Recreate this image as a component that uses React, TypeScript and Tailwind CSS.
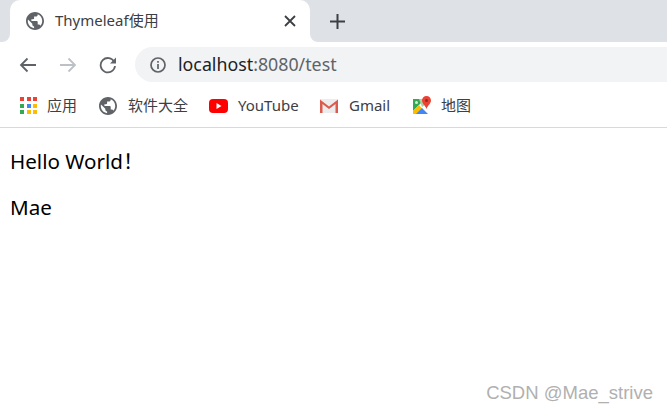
import React from 'react';

const UI_FONT = "font-['Noto_Sans','Noto_Sans_CJK_SC',sans-serif]";

function Globe({ size }: { size: number }) {
  return (
    <svg width={size} height={size} viewBox="2 2 20 20" className="shrink-0">
      <path
        fill="#5f6368"
        d="M12 2C6.48 2 2 6.48 2 12s4.48 10 10 10 10-4.48 10-10S17.52 2 12 2zm-1 17.93c-3.95-.49-7-3.85-7-7.93 0-.62.08-1.21.21-1.79L9 15v1c0 1.1.9 2 2 2v1.93zm6.9-2.54c-.26-.81-1-1.39-1.9-1.39h-1v-3c0-.55-.45-1-1-1H8v-2h2c.55 0 1-.45 1-1V7h2c1.1 0 2-.9 2-2v-.41c2.93 1.19 5 4.06 5 7.41 0 2.08-.8 3.97-2.1 5.39z"
      />
    </svg>
  );
}

function AppsIcon() {
  const colors = ['#ea4335', '#ea4335', '#ea4335', '#34a853', '#4285f4', '#fbbc05', '#34a853', '#fbbc05', '#fbbc05'];
  return (
    <div className="grid grid-cols-3 gap-[2.5px] shrink-0">
      {colors.map((c, i) => (
        <div key={i} className="w-[4px] h-[4px]" style={{ backgroundColor: c }} />
      ))}
    </div>
  );
}

function YouTubeIcon() {
  return (
    <svg width="19" height="14" viewBox="0 0 19 14" className="shrink-0">
      <rect width="19" height="14" rx="4" fill="#ff0000" />
      <path d="M7.5 4 L12.5 7 L7.5 10 Z" fill="#fff" />
    </svg>
  );
}

function GmailIcon() {
  return (
    <svg width="20" height="15" viewBox="0 0 20 15" className="shrink-0">
      <rect x="1" y="1" width="18" height="14" fill="#ececec" />
      <path d="M1 15 V1.5 L10 8.5 L19 1.5 V15 H16.5 V6 L10 11 L3.5 6 V15 Z" fill="#db5a4c" />
    </svg>
  );
}

function MapsIcon() {
  return (
    <svg width="20" height="20" viewBox="0 0 20 20" className="shrink-0">
      <path d="M1 3 H13 L1 15 Z" fill="#34a853" />
      <path d="M1 15 L7 9 L15 18 H1 Z" fill="#fbbc05" />
      <path d="M4 18 L10 12 L16 18 Z" fill="#4285f4" />
      <path d="M7 3 H13 V9 L10 11 Z" fill="#a6d5a0" />
      <circle cx="4.5" cy="6.5" r="1.5" fill="#d5ecd0" />
      <path d="M14.5 0 C17 0 19 2 19 4.5 C19 7.5 16 9 14.5 13 C13 9 10 7.5 10 4.5 C10 2 12 0 14.5 0 Z" fill="#ea4335" />
      <circle cx="14.5" cy="4.5" r="1.5" fill="#8f2a20" />
    </svg>
  );
}

export default function App() {
  return (
    <div className={`w-[667px] h-[411px] bg-white overflow-hidden flex flex-col ${UI_FONT}`}>
      {/* tab strip */}
      <div className="h-[42px] flex bg-white">
        <div className="w-[10px] bg-[#dee1e6] rounded-br-[8px]" />
        <div className="w-[300px] bg-[#dee1e6]">
          <div className="h-full bg-white rounded-t-[10px] flex items-center pl-[16px] pr-[12px] pb-[1px]">
            <Globe size={18} />
            <span className="ml-[11px] text-[15px] text-[#3c4043] leading-none">Thymeleaf使用</span>
            <svg width="12" height="12" viewBox="0 0 12 12" className="ml-auto mr-[2px]">
              <path d="M1 1 L11 11 M11 1 L1 11" stroke="#3c4043" strokeWidth="1.8" />
            </svg>
          </div>
        </div>
        <div className="flex-1 bg-[#dee1e6] rounded-bl-[8px] flex items-center pl-[20px]">
          <svg width="15" height="15" viewBox="0 0 15 15">
            <path d="M7.5 0 V15 M0 7.5 H15" stroke="#3c4043" strokeWidth="2" />
          </svg>
        </div>
      </div>

      {/* toolbar */}
      <div className="h-[46px] flex items-center pl-[19px] pb-[1px]">
        <svg width="18" height="16" viewBox="0 0 18 16" className="shrink-0">
          <path d="M17 8 H2 M8.5 1.5 L2 8 L8.5 14.5" fill="none" stroke="#5f6368" strokeWidth="1.8" />
        </svg>
        <svg width="18" height="16" viewBox="0 0 18 16" className="shrink-0 ml-[22px]">
          <path d="M1 8 H16 M9.5 1.5 L16 8 L9.5 14.5" fill="none" stroke="#bdc1c6" strokeWidth="1.8" />
        </svg>
        <svg width="18" height="18" viewBox="0 0 18 18" className="shrink-0 ml-[22px]">
          <path d="M15.3 6 A7.2 7.2 0 1 0 16 10" fill="none" stroke="#5f6368" strokeWidth="1.8" />
          <path d="M17 1.5 V7.5 H11 Z" fill="#5f6368" />
        </svg>
        <div className="ml-[18px] flex-1 h-[35px] bg-[#f1f3f4] rounded-l-[18px] flex items-center pl-[15px]">
          <svg width="16" height="16" viewBox="0 0 16 16" className="shrink-0">
            <circle cx="8" cy="8" r="7" fill="none" stroke="#5f6368" strokeWidth="1.7" />
            <path d="M8 7 V12 M8 4 V5.8" stroke="#5f6368" strokeWidth="1.7" />
          </svg>
          <span className="ml-[12px] text-[17.8px] leading-none text-[#5f6368]">
            <span className="text-[#202124]">localhost</span>:8080/test
          </span>
        </div>
      </div>

      {/* bookmarks bar */}
      <div className="h-[40px] flex items-center pl-[20px] border-b border-[#d9d9d9] text-[15px] text-[#3c4043] pb-[4px]">
        <AppsIcon />
        <span className="ml-[10px] w-[36px]">应用</span>
        <div className="ml-[16px]">
          <Globe size={18} />
        </div>
        <span className="ml-[11px] w-[71px]">软件大全</span>
        <div className="ml-[10px]">
          <YouTubeIcon />
        </div>
        <span className="ml-[10px] w-[61px]">YouTube</span>
        <div className="ml-[20px]">
          <GmailIcon />
        </div>
        <span className="ml-[10px] w-[42px]">Gmail</span>
        <div className="ml-[21px]">
          <MapsIcon />
        </div>
        <span className="ml-[9px]">地图</span>
      </div>

      {/* page */}
      <div className="flex-1 pl-[10px] pt-[20px] text-[20.6px] leading-[26px] text-black flex flex-col gap-[20px]">
        <p>Hello World！</p>
        <p>Mae</p>
      </div>
      <div className="flex justify-end pr-[14px] pb-[6px] text-[18.5px] leading-[24px] text-[#b0b0b0] font-['Liberation_Sans',sans-serif]">
        CSDN @Mae_strive
      </div>
    </div>
  );
}
